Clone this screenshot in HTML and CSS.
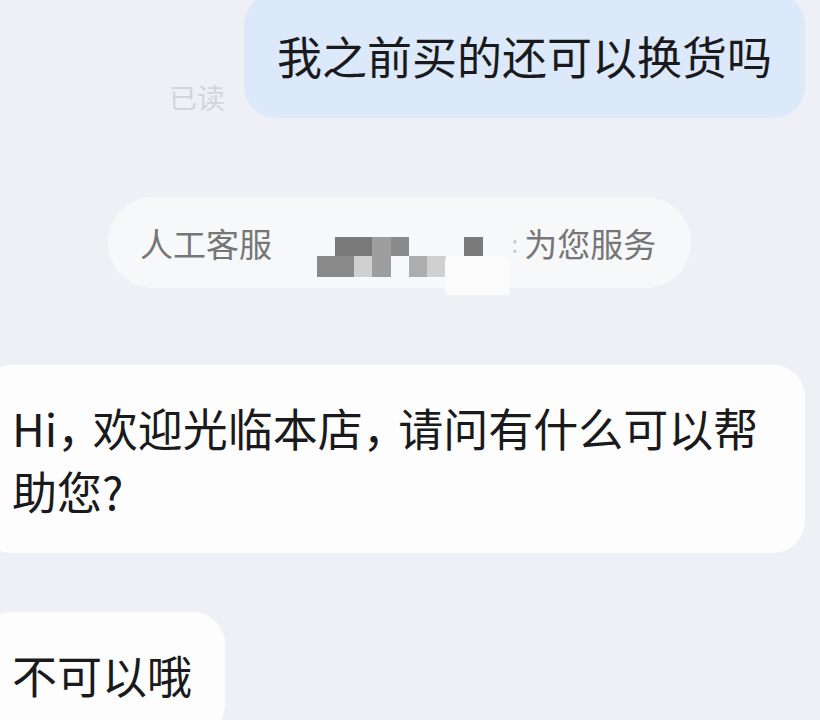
FILE: index.html
```html
<!DOCTYPE html>
<html lang="zh-CN">
<head>
  <meta charset="UTF-8">
  <title>客服聊天</title>
  <link rel="stylesheet" href="styles.css">
</head>
<body>

  <div class="chat">

    <div class="row row-out">
      <span class="read">已读</span>
      <div class="bubble bubble-out">我之前买的还可以换货吗</div>
    </div>

    <div class="notice">
      <span>人工客服</span>
      <span class="mosaic">
        <i class="px c1" style="grid-area: 1 / 2 / 2 / 4"></i>
        <i class="px c3" style="grid-area: 1 / 4 / 2 / 5"></i>
        <i class="px c2" style="grid-area: 1 / 5 / 2 / 6"></i>
        <i class="px c1" style="grid-area: 1 / 9 / 2 / 10"></i>
        <i class="px c2" style="grid-area: 2 / 1 / 3 / 3"></i>
        <i class="px c5" style="grid-area: 2 / 3 / 3 / 4"></i>
        <i class="px c3" style="grid-area: 2 / 4 / 3 / 5"></i>
        <i class="px c4" style="grid-area: 2 / 6 / 3 / 7"></i>
        <i class="px c5" style="grid-area: 2 / 7 / 3 / 8"></i>
      </span>
      <span class="colon">:</span>
      <span>为您服务</span>
      <span class="patch"></span>
    </div>

    <div class="row row-in">
      <div class="bubble bubble-in wide">Hi， 欢迎光临本店， 请问有什么可以帮助您?</div>
    </div>

    <div class="row row-in row-last">
      <div class="bubble bubble-in">不可以哦</div>
    </div>

  </div>

</body>
</html>
```

FILE: styles.css
```css
html, body {
  margin: 0;
  height: 720px;
  overflow: hidden;
}
body {
  font-family: "Noto Sans CJK SC", "Noto Sans", sans-serif;
  background: #eef0f5;
  color: #1a1a1c;
}
.chat {
  display: flex;
  flex-direction: column;
  align-items: flex-start;
}

.row {
  display: flex;
  width: 100%;
  box-sizing: border-box;
}
.row-out {
  justify-content: flex-end;
  align-items: flex-end;
  gap: 19px;
  padding-right: 15px;
  margin-top: -7px;
}
.row-in {
  padding-right: 15px;
  margin-top: 77px;
}
.row-last {
  margin-top: 59px;
}

.bubble {
  font-size: 45px;
  line-height: 63px;
  padding: 31px 33px;
  border-radius: 32px;
}
.bubble-out {
  background: #dbe9fa;
}
.bubble-in {
  background: #fdfdfe;
  margin-left: -21px;
}
.wide {
  padding-right: 26px;
  font-feature-settings: "halt";
  word-spacing: 3px;
}
.read {
  font-size: 28px;
  line-height: 1;
  color: #d2d5db;
  margin-bottom: 7px;
}

.notice {
  position: relative;
  display: flex;
  align-items: center;
  height: 91px;
  margin-top: 79px;
  margin-left: 108px;
  padding: 0 35px 0 32px;
  border-radius: 46px;
  background: #f7f8fa;
  font-size: 33px;
  color: #767676;
}
.mosaic {
  display: grid;
  grid-template-columns: repeat(9, 18.4px);
  grid-template-rows: 19px 21px;
  margin: 28px 0 0 45px;
}
.px { display: block; }
.c1 { background: #7a7a7a; }
.c2 { background: #8a8a8a; }
.c3 { background: #9e9e9e; }
.c4 { background: #adadad; }
.c5 { background: #d0d0d0; }
.colon {
  margin: 0 6px 0 29px;
  color: #c8c8c8;
  font-size: 24px;
}
.patch {
  position: absolute;
  left: 337px;
  top: 60px;
  width: 65px;
  height: 38px;
  background: #fbfbfc;
  border-radius: 4px;
}
```
